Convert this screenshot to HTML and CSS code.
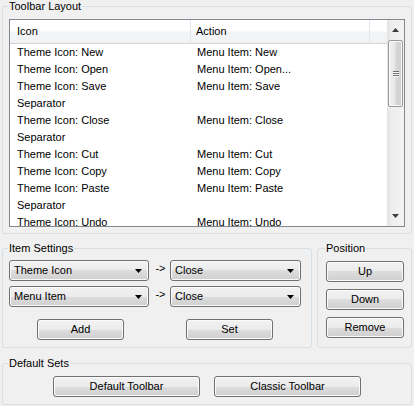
FILE: index.html
```html
<!DOCTYPE html>
<html>
<head>
<meta charset="utf-8">
<link rel="stylesheet" href="styles.css">
</head>
<body>
<div class="dialog">
  <fieldset class="group group-layout">
    <legend>Toolbar Layout</legend>
    <div class="list">
      <div class="list-main">
        <div class="list-header">
          <div class="hcell hcell-1">Icon</div>
          <div class="hcell hcell-2">Action</div>
          <div class="hcell hcell-3"></div>
        </div>
        <div class="rows">
          <div class="row"><span class="c1">Theme Icon: New</span><span class="c2">Menu Item: New</span></div>
          <div class="row"><span class="c1">Theme Icon: Open</span><span class="c2">Menu Item: Open...</span></div>
          <div class="row"><span class="c1">Theme Icon: Save</span><span class="c2">Menu Item: Save</span></div>
          <div class="row"><span class="c1">Separator</span><span class="c2"></span></div>
          <div class="row"><span class="c1">Theme Icon: Close</span><span class="c2">Menu Item: Close</span></div>
          <div class="row"><span class="c1">Separator</span><span class="c2"></span></div>
          <div class="row"><span class="c1">Theme Icon: Cut</span><span class="c2">Menu Item: Cut</span></div>
          <div class="row"><span class="c1">Theme Icon: Copy</span><span class="c2">Menu Item: Copy</span></div>
          <div class="row"><span class="c1">Theme Icon: Paste</span><span class="c2">Menu Item: Paste</span></div>
          <div class="row"><span class="c1">Separator</span><span class="c2"></span></div>
          <div class="row"><span class="c1">Theme Icon: Undo</span><span class="c2">Menu Item: Undo</span></div>
        </div>
      </div>
      <div class="scrollbar">
        <div class="sb-btn"><svg width="7" height="4" viewBox="0 0 7 4"><polygon points="0,4 7,4 3.5,0" fill="#3c3c3c"/></svg></div>
        <div class="sb-track">
          <div class="sb-thumb">
            <div class="grip"><i></i><i></i><i></i></div>
          </div>
        </div>
        <div class="sb-btn"><svg width="7" height="4" viewBox="0 0 7 4"><polygon points="0,0 7,0 3.5,4" fill="#3c3c3c"/></svg></div>
      </div>
    </div>
  </fieldset>

  <div class="mid-row">
    <fieldset class="group group-item">
      <legend>Item Settings</legend>
      <div class="combo-grid">
        <div class="combo combo-a"><span>Theme Icon</span><svg width="7" height="4" viewBox="0 0 7 4"><polygon points="0,0 7,0 3.5,4" fill="#000"/></svg></div>
        <div class="arrow-txt">-&gt;</div>
        <div class="combo combo-b"><span>Close</span><svg width="7" height="4" viewBox="0 0 7 4"><polygon points="0,0 7,0 3.5,4" fill="#000"/></svg></div>
        <div class="combo combo-a"><span>Menu Item</span><svg width="7" height="4" viewBox="0 0 7 4"><polygon points="0,0 7,0 3.5,4" fill="#000"/></svg></div>
        <div class="arrow-txt">-&gt;</div>
        <div class="combo combo-b"><span>Close</span><svg width="7" height="4" viewBox="0 0 7 4"><polygon points="0,0 7,0 3.5,4" fill="#000"/></svg></div>
      </div>
      <div class="item-buttons">
        <div class="btn btn-small">Add</div>
        <div class="btn btn-small">Set</div>
      </div>
    </fieldset>
    <fieldset class="group group-pos">
      <legend>Position</legend>
      <div class="pos-buttons">
        <div class="btn">Up</div>
        <div class="btn">Down</div>
        <div class="btn">Remove</div>
      </div>
    </fieldset>
  </div>

  <fieldset class="group group-defaults">
    <legend>Default Sets</legend>
    <div class="default-buttons">
      <div class="btn btn-wide">Default Toolbar</div>
      <div class="btn btn-wide">Classic Toolbar</div>
    </div>
  </fieldset>
</div>
</body>
</html>
```

FILE: styles.css
```css
* { box-sizing: border-box; }
html, body {
  margin: 0;
  padding: 0;
  background: #f0f0f0;
}
body {
  width: 414px;
  height: 406px;
  overflow: hidden;
  font-family: "Liberation Sans", Arial, sans-serif;
  font-size: 11px;
  color: #000;
}
.dialog {
  display: flex;
  flex-direction: column;
  padding: 0 2px;
}
.group {
  margin: 0;
  border: 1px solid #d5dfe5;
  border-radius: 3px;
  min-inline-size: 0;
  padding: 6px;
}
.group legend {
  padding: 0 1px;
  margin-left: -1px;
  line-height: 13px;
  height: 13px;
}
.group-layout {
  padding: 6px 6px 6px 6px;
}
.list {
  height: 208px;
  border: 1px solid #828790;
  background: #fff;
  display: flex;
}
.list-main {
  flex: 1;
  display: flex;
  flex-direction: column;
  overflow: hidden;
}
.list-header {
  height: 24px;
  display: flex;
  flex: none;
  background: linear-gradient(#ffffff 0%, #ffffff 45%, #f3f4f6 55%, #f1f2f4 100%);
  border-bottom: 1px solid #d5d5d5;
}
.hcell {
  height: 23px;
  line-height: 23px;
  border-right: 1px solid #e3e6ea;
}
.hcell-1 { width: 181px; padding-left: 7px; }
.hcell-2 { width: 179px; padding-left: 5px; }
.hcell-3 { flex: 1; border-right: none; }
.rows {
  flex: 1;
  overflow: hidden;
}
.row {
  display: flex;
  height: 17px;
  line-height: 17px;
  white-space: nowrap;
}
.row .c1 { width: 181px; padding-left: 7px; }
.row .c2 { padding-left: 6px; }
.scrollbar {
  width: 17px;
  flex: none;
  display: flex;
  flex-direction: column;
  background: linear-gradient(to right, #e3e3e3 0%, #eeeeee 30%, #f3f3f3 100%);
}
.sb-btn {
  height: 20px;
  flex: none;
  display: flex;
  align-items: center;
  justify-content: center;
}
.sb-track {
  flex: 1;
  padding: 0 0 0 1px;
}
.sb-thumb {
  margin-top: 0px;
  width: 15px;
  height: 67px;
  border: 1px solid #9a9a9a;
  border-radius: 2px;
  background: linear-gradient(to right, #f3f3f3 0%, #e6e6e6 45%, #d6d6d6 55%, #cfcfcf 100%);
  box-shadow: inset 0 0 0 1px #f8f8f8;
  display: flex;
  align-items: center;
  justify-content: center;
}
.grip {
  display: flex;
  flex-direction: column;
  gap: 1px;
}
.grip i {
  display: block;
  width: 6px;
  height: 1px;
  background: #6f6f6f;
  box-shadow: 0 1px 0 #fafafa;
}
.mid-row {
  display: flex;
  gap: 5px;
  margin-top: 8px;
}
.group-item {
  width: 310px;
  padding: 5px 6px 7px 6px;
}
.group-pos {
  width: 95px;
  padding: 6px 7px 7px 8px;
}
.combo-grid {
  display: grid;
  grid-template-columns: 140px 21px 131px;
  row-gap: 5px;
}
.combo, .btn {
  height: 21px;
  border: 1px solid #707070;
  border-radius: 3px;
  background: linear-gradient(#f2f2f2 0%, #ebebeb 50%, #dddddd 50%, #cfcfcf 100%);
  box-shadow: inset 0 0 0 1px #fbfbfb;
}
.combo {
  display: flex;
  align-items: center;
  justify-content: space-between;
  padding: 0 6px 0 4px;
}
.combo span { line-height: 19px; }
.arrow-txt {
  text-align: center;
  line-height: 17px;
  padding-left: 2px;
}
.item-buttons {
  display: flex;
  gap: 62px;
  padding-left: 28px;
  margin-top: 12px;
}
.btn {
  display: flex;
  align-items: center;
  justify-content: center;
  line-height: 19px;
}
.btn-small { width: 87px; }
.pos-buttons {
  display: flex;
  flex-direction: column;
  gap: 7px;
}
.pos-buttons .btn { width: 78px; }
.group-defaults {
  margin-top: 9px;
  padding: 6px 6px 7px 6px;
}
.default-buttons {
  display: flex;
  justify-content: center;
  gap: 14px;
}
.btn-wide { width: 147px; }
```
